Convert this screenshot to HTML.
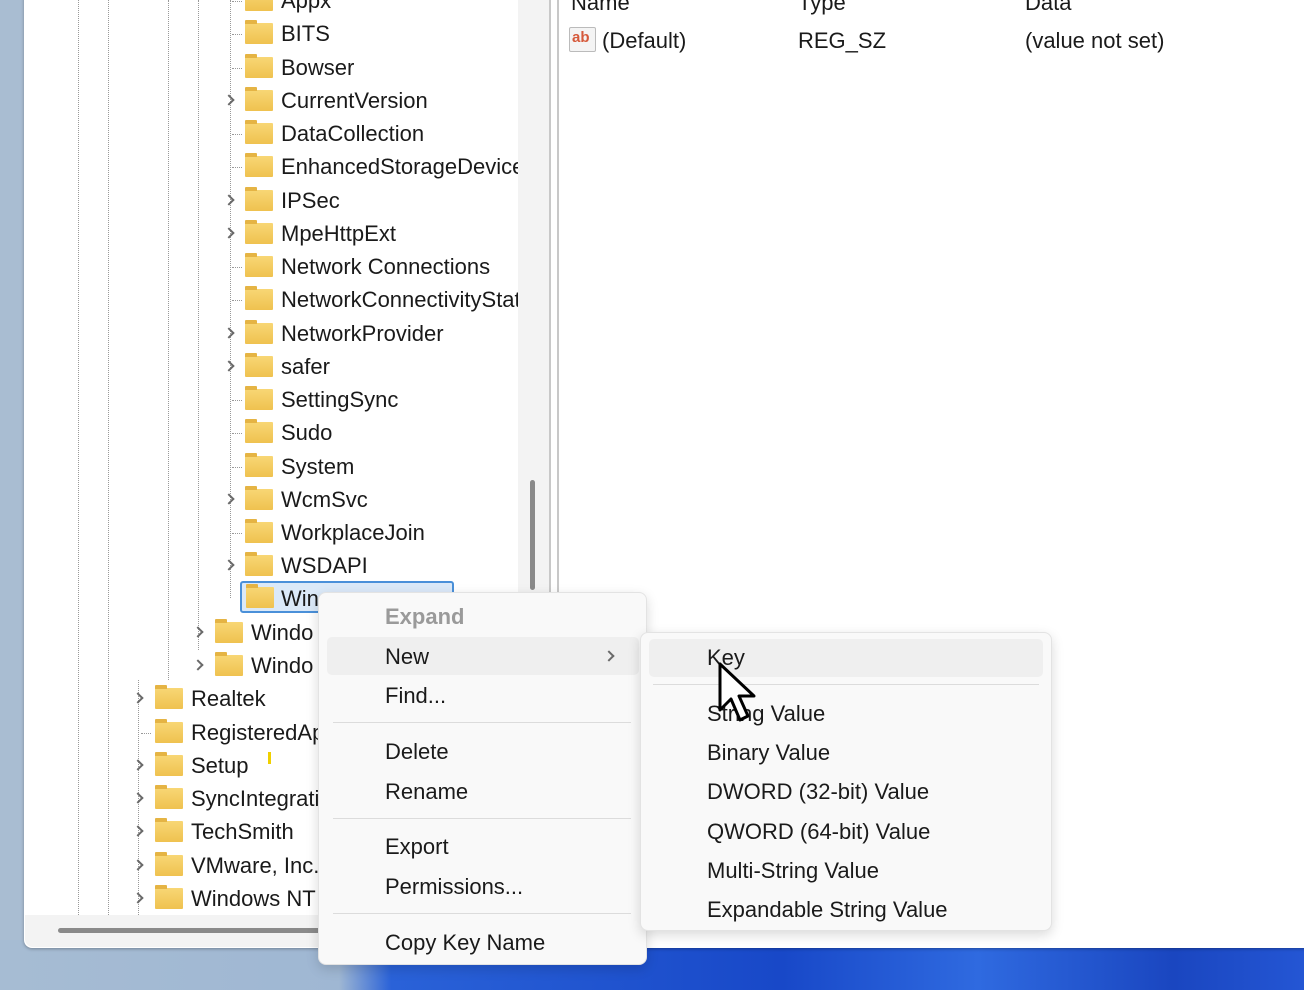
<!DOCTYPE html>
<html><head><meta charset="utf-8"><style>
*{margin:0;padding:0;box-sizing:border-box}
body{width:1304px;height:990px;overflow:hidden;position:relative;font-family:"Liberation Sans",sans-serif;background:#a9bdd2}
.abs{position:absolute}
.desk{position:absolute;left:0;top:940px;width:1304px;height:50px;background:linear-gradient(90deg,#a6bcd3 0%,#9fb7d3 26%,#2a62d8 30%,#1848c8 60%,#2f6ae0 75%,#1a46c0 90%,#2456d4 100%)}
.win{position:absolute;left:24px;top:-10px;width:1290px;height:958px;background:#fff;border-radius:8px;box-shadow:0 1px 3px rgba(0,0,0,.3)}
.row{position:absolute;height:33px;line-height:33px;font-size:22px;color:#1a1a1a;white-space:nowrap}
.fold{position:absolute;width:28px;height:21px;top:6px;background:linear-gradient(#f8d775,#efc24f);border-radius:1px}
.fold:before{content:"";position:absolute;left:0;top:-3px;width:12px;height:4px;background:#e5b444;border-radius:1px 1px 0 0}
.chev{position:absolute;width:8px;height:8px;border-right:2px solid #6a6a6a;border-top:2px solid #6a6a6a;transform:rotate(45deg)}
.dv{position:absolute;border-left:1px dotted #999;width:0}
.dh{position:absolute;border-top:1px dotted #999;height:0;width:10px}
.menu{position:absolute;background:#f9f9f9;border:1px solid #e3e3e3;border-radius:8px;box-shadow:0 4px 12px rgba(0,0,0,.15)}
.mi{position:absolute;font-size:22px;color:#1a1a1a;white-space:nowrap}
.sep{position:absolute;height:1px;background:#dcdcdc}
</style></head><body>
<div class="desk"></div>
<div class="win"></div>
<div class="abs" style="left:518px;top:0;width:31px;height:915px;background:#f3f3f3"></div>
<div class="abs" style="left:530px;top:480px;width:5px;height:110px;background:#8a8a8a;border-radius:3px"></div>
<div class="abs" style="left:549px;top:0;width:2px;height:915px;background:#c8c8c8"></div>
<div class="abs" style="left:557px;top:0;width:2px;height:948px;background:#c8c8c8"></div>
<div class="abs" style="left:25px;top:915px;width:524px;height:32px;background:#f3f3f3;border-radius:0 0 0 8px"></div>
<div class="abs" style="left:58px;top:928px;width:270px;height:5px;background:#8a8a8a;border-radius:3px"></div>
<div class="dv" style="left:78px;top:0;height:915px"></div>
<div class="dv" style="left:108px;top:0;height:915px"></div>
<div class="dv" style="left:138px;top:680px;height:235px"></div>
<div class="dv" style="left:168px;top:0;height:680px"></div>
<div class="dv" style="left:198px;top:0;height:650px"></div>
<div class="dv" style="left:230px;top:0;height:598px"></div>
<div id="tree"></div>
<div class="row" style="left:571px;top:-14px">Name</div>
<div class="row" style="left:798px;top:-14px">Type</div>
<div class="row" style="left:1025px;top:-14px">Data</div>
<div class="abs" style="left:569px;top:27px;width:27px;height:25px;border:1px solid #bbb;background:#f4f4f4;border-radius:2px;font:bold 15px 'Liberation Sans',sans-serif;color:#d65a3c;line-height:20px;padding-left:2px">ab</div>
<div class="row" style="left:602px;top:24px">(Default)</div>
<div class="row" style="left:798px;top:24px">REG_SZ</div>
<div class="row" style="left:1025px;top:24px">(value not set)</div>
<div class="abs" style="left:240px;top:581px;width:214px;height:32px;border:2px solid #4a90d9;background:#dbe9f8;border-radius:3px"></div>
<div class="fold" style="left:246px;top:587px"></div>
<div class="row" style="left:281px;top:582px">Win</div>
<div class="menu" style="left:318px;top:592px;width:329px;height:373px">
 <div class="abs" style="left:8px;top:44px;width:312px;height:38px;background:#efefef;border-radius:5px"></div>
 <div class="mi" style="left:66px;top:11px;color:#9a9a9a;font-weight:bold">Expand</div>
 <div class="mi" style="left:66px;top:51px">New</div>
 <div class="chev" style="left:286px;top:59px"></div>
 <div class="mi" style="left:66px;top:90px">Find...</div>
 <div class="sep" style="left:14px;top:129px;width:298px"></div>
 <div class="mi" style="left:66px;top:146px">Delete</div>
 <div class="mi" style="left:66px;top:186px">Rename</div>
 <div class="sep" style="left:14px;top:225px;width:298px"></div>
 <div class="mi" style="left:66px;top:241px">Export</div>
 <div class="mi" style="left:66px;top:281px">Permissions...</div>
 <div class="sep" style="left:14px;top:320px;width:298px"></div>
 <div class="mi" style="left:66px;top:337px">Copy Key Name</div>
</div>
<div class="menu" style="left:640px;top:632px;width:412px;height:299px">
 <div class="abs" style="left:8px;top:6px;width:394px;height:38px;background:#efefef;border-radius:5px"></div>
 <div class="mi" style="left:66px;top:12px">Key</div>
 <div class="sep" style="left:12px;top:51px;width:386px"></div>
 <div class="mi" style="left:66px;top:68px">String Value</div>
 <div class="mi" style="left:66px;top:107px">Binary Value</div>
 <div class="mi" style="left:66px;top:146px">DWORD (32-bit) Value</div>
 <div class="mi" style="left:66px;top:186px">QWORD (64-bit) Value</div>
 <div class="mi" style="left:66px;top:225px">Multi-String Value</div>
 <div class="mi" style="left:66px;top:264px">Expandable String Value</div>
</div>
<svg class="abs" style="left:716px;top:662px" width="46" height="64" viewBox="0 0 46 64"><path d="M4 2 L4 48 L15 37 L24 58 L32 54 L23 34 L38 34 Z" fill="#fff" stroke="#000" stroke-width="3" stroke-linejoin="round"/></svg>
<div class="abs" style="left:268px;top:752px;width:3px;height:12px;background:#f0d000"></div>
<script>
var rows=[["Appx",0,0],["BITS",0,0],["Bowser",0,0],["CurrentVersion",0,1],["DataCollection",0,0],["EnhancedStorageDevices",0,0],["IPSec",0,1],["MpeHttpExt",0,1],["Network Connections",0,0],["NetworkConnectivityStatus",0,0],["NetworkProvider",0,1],["safer",0,1],["SettingSync",0,0],["Sudo",0,0],["System",0,0],["WcmSvc",0,1],["WorkplaceJoin",0,0],["WSDAPI",0,1],[null],["Windo",1,1],["Windo",1,1],["Realtek",2,1],["RegisteredApplications",2,0],["Setup",2,1],["SyncIntegration",2,1],["TechSmith",2,1],["VMware, Inc.",2,1],["Windows NT",2,1]];
var h="",base=[[228,245,281],[197,215,251],[137,155,191]];
rows.forEach(function(r,i){if(!r[0])return;var y=Math.round(-16+i*33.25);var b=base[r[1]];
var w=(r[1]==0?518:318)-b[2];
if(r[2])h+='<div class="chev" style="left:'+(b[0]-3)+'px;top:'+(y+12)+'px"></div>';else h+='<div class="dh" style="left:'+(b[0]+4)+'px;top:'+(y+17)+'px"></div>';
h+='<div class="fold" style="left:'+b[1]+'px;top:'+(y+6)+'px"></div><div class="row" style="left:'+b[2]+'px;top:'+y+'px;width:'+w+'px;overflow:hidden">'+r[0]+'</div>';});
document.getElementById("tree").innerHTML=h;
</script>
</body></html>
